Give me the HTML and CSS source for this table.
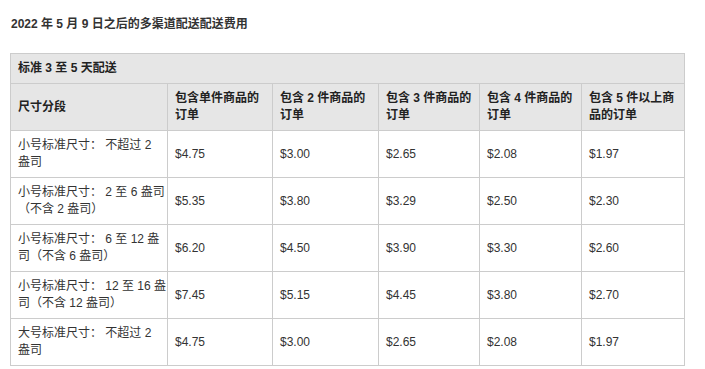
FILE: index.html
```html
<!DOCTYPE html>
<html lang="zh-CN">
<head>
<meta charset="utf-8">
<link rel="stylesheet" href="styles.css">
</head>
<body>
<div class="page">
  <h3 class="title">2022 年 5 月 9 日之后的多渠道配送配送费用</h3>
  <table class="fees">
    <colgroup>
      <col class="c0"><col class="c1"><col class="c2"><col class="c3"><col class="c4"><col class="c5">
    </colgroup>
    <thead>
      <tr><th colspan="6">标准 3 至 5 天配送</th></tr>
      <tr>
        <th class="size">尺寸分段</th>
        <th>包含单件商品的订单</th>
        <th>包含 2 件商品的订单</th>
        <th>包含 3 件商品的订单</th>
        <th>包含 4 件商品的订单</th>
        <th>包含 5 件以上商品的订单</th>
      </tr>
    </thead>
    <tbody>
      <tr><td class="size">小号标准尺寸： 不超过 2 盎司</td><td>$4.75</td><td>$3.00</td><td>$2.65</td><td>$2.08</td><td>$1.97</td></tr>
      <tr><td class="size">小号标准尺寸： 2 至 6 盎司（不含 2 盎司）</td><td>$5.35</td><td>$3.80</td><td>$3.29</td><td>$2.50</td><td>$2.30</td></tr>
      <tr><td class="size">小号标准尺寸： 6 至 12 盎司（不含 6 盎司）</td><td>$6.20</td><td>$4.50</td><td>$3.90</td><td>$3.30</td><td>$2.60</td></tr>
      <tr><td class="size">小号标准尺寸： 12 至 16 盎司（不含 12 盎司）</td><td>$7.45</td><td>$5.15</td><td>$4.45</td><td>$3.80</td><td>$2.70</td></tr>
      <tr><td class="size">大号标准尺寸： 不超过 2 盎司</td><td>$4.75</td><td>$3.00</td><td>$2.65</td><td>$2.08</td><td>$1.97</td></tr>
    </tbody>
  </table>
</div>
</body>
</html>
```
FILE: styles.css
```css
html, body {
  margin: 0;
  padding: 0;
  background: #fff;
  overflow: hidden;
}
body {
  font-family: "Liberation Sans", Arial, "Noto Sans CJK SC", sans-serif;
  font-size: 12px;
  color: #333;
}
.page {
  padding: 0 10px;
}
.title {
  margin: 0;
  padding: 16px 0 0 1px;
  font-size: 12px;
  line-height: 17px;
  font-weight: bold;
  color: #333;
  height: 53px;
  box-sizing: border-box;
}
.fees {
  border-collapse: collapse;
  table-layout: fixed;
  width: 675px;
}
.c0 { width: 157px; }
.c1 { width: 105px; }
.c2 { width: 106px; }
.c3 { width: 101px; }
.c4 { width: 102px; }
.c5 { width: 103px; }
.fees th, .fees td {
  border: 1px solid #ccc;
  padding: 6px 7px;
  line-height: 17px;
  text-align: left;
  vertical-align: middle;
}
.fees .size {
  padding-right: 0.5px;
}
.fees th {
  background: #e6e6e6;
  font-weight: bold;
  color: #222;
}
.fees td {
  font-weight: normal;
}
```
